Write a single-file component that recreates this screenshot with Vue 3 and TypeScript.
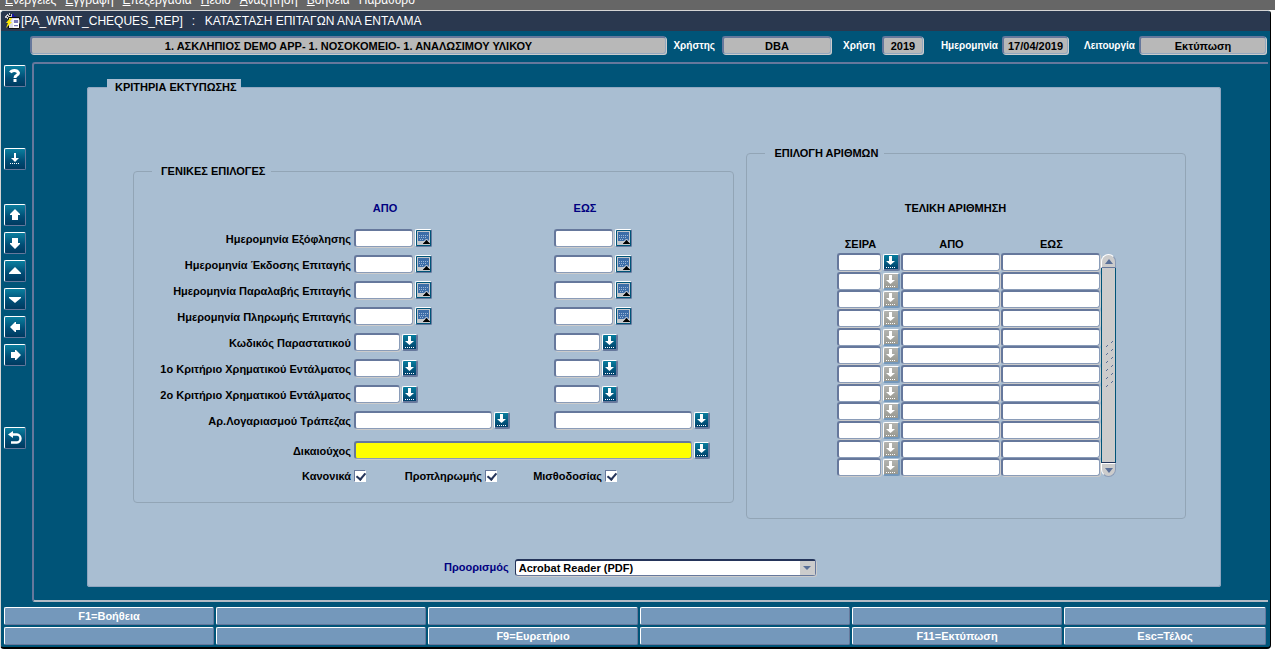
<script setup lang="ts">
import { reactive, ref } from 'vue'

type FieldKind = 'date' | 'code' | 'account'

interface CriteriaRow {
  id: string
  label: string
  kind: FieldKind
}

interface Tool {
  name: string
  icon: string
  spacing: string
}

const menus: string[] = ['Ενέργειες', 'Εγγραφή', 'Επεξεργασία', 'Πεδίο', 'Αναζήτηση', 'Βοήθεια', 'Παράθυρο']

const tools: Tool[] = [
  { name: 'Βοήθεια', icon: 'help', spacing: '' },
  { name: 'Λίστα τιμών', icon: 'list', spacing: 'far' },
  { name: 'Προηγούμενο μπλοκ', icon: 'up', spacing: 'apart' },
  { name: 'Επόμενο μπλοκ', icon: 'down', spacing: '' },
  { name: 'Προηγούμενη εγγραφή', icon: 'prev', spacing: '' },
  { name: 'Επόμενη εγγραφή', icon: 'next', spacing: '' },
  { name: 'Αριστερά', icon: 'left', spacing: '' },
  { name: 'Δεξιά', icon: 'right', spacing: '' },
  { name: 'Επιστροφή', icon: 'back', spacing: 'far' },
]

const criteria: CriteriaRow[] = [
  { id: 'payoff', label: 'Ημερομηνία Εξόφλησης', kind: 'date' },
  { id: 'issue', label: 'Ημερομηνία Έκδοσης Επιταγής', kind: 'date' },
  { id: 'receipt', label: 'Ημερομηνία Παραλαβής Επιταγής', kind: 'date' },
  { id: 'payment', label: 'Ημερομηνία Πληρωμής Επιταγής', kind: 'date' },
  { id: 'doc', label: 'Κωδικός Παραστατικού', kind: 'code' },
  { id: 'crit1', label: '1ο Κριτήριο Χρηματικού Εντάλματος', kind: 'code' },
  { id: 'crit2', label: '2ο Κριτήριο Χρηματικού Εντάλματος', kind: 'code' },
  { id: 'bank', label: 'Αρ.Λογαριασμού Τράπεζας', kind: 'account' },
]

const checks = reactive({ regular: true, prepaid: true, payroll: true })
const destination = ref('pdf')
const fnKeys: string[] = ['F1=Βοήθεια', '', '', '', '', '', '', '', 'F9=Ευρετήριο', '', 'F11=Εκτύπωση', 'Esc=Τέλος']
</script>

<template>
  <div class="app">
    <nav class="menubar">
      <a v-for="m in menus" :key="m" href="#"><span class="key">{{ m.charAt(0) }}</span>{{ m.slice(1) }}</a>
    </nav>

    <main class="window">
      <header class="titlebar">
        <svg class="app-icon" viewBox="0 0 16 16" aria-hidden="true">
          <path d="M1 3h1V2h1V1h1v1h1V0h1v2h1V1h1v2h1v2H8v1H3V5H1z" fill="#c9c9cf" />
          <path d="M8 1h2v2h2v2h-2V4H8z" fill="#1616a0" />
          <path d="M5 2h2v1H5zM3 3h1v1H3z" fill="#111" />
          <path d="M4.500 4.500h11v11h-11z" fill="#dcdce4" stroke="#111" />
          <path d="M10 7h4M10 9h4M10 12h4" stroke="#14148c" />
          <path d="M9 6.500h6v4H9zM9.500 11.500h5v3h-5z" fill="none" stroke="#fff" />
          <path d="M6 5 2 10h2l-2 5 6-6H6l2-4z" fill="#ffe800" />
        </svg>
        <span>[PA_WRNT_CHEQUES_REP]</span>
        <span class="colon">:</span>
        <span>ΚΑΤΑΣΤΑΣΗ ΕΠΙΤΑΓΩΝ ΑΝΑ ΕΝΤΑΛΜΑ</span>
      </header>

      <div class="status">
        <input class="ro context" aria-label="Εφαρμογή" readonly value="1. ΑΣΚΛΗΠΙΟΣ DEMO APP- 1. ΝΟΣΟΚΟΜΕΙΟ- 1. ΑΝΑΛΩΣΙΜΟΥ ΥΛΙΚΟΥ" />
        <label class="l-user" for="user">Χρήστης</label>
        <input id="user" class="ro user" readonly value="DBA" />
        <label class="l-year" for="year">Χρήση</label>
        <input id="year" class="ro year" readonly value="2019" />
        <label class="l-date" for="date">Ημερομηνία</label>
        <input id="date" class="ro date" readonly value="17/04/2019" />
        <label class="l-mode" for="mode">Λειτουργία</label>
        <input id="mode" class="ro mode" readonly value="Εκτύπωση" />
      </div>

      <div class="body">
        <aside class="toolbar">
          <button v-for="t in tools" :key="t.icon" type="button" :class="['tool', t.spacing]" :aria-label="t.name">
            <svg viewBox="0 0 18 18" aria-hidden="true">
              <path v-if="t.icon === 'help'" d="M4.500 5.500Q5.500 3.500 8.500 3.500T12.500 6Q12.500 7.500 10.500 8.500Q9 9.300 9 11M7.500 13.500h3" fill="none" stroke="#fff" stroke-width="3" />
              <path v-else-if="t.icon === 'list'" d="M8 3h2v5h3l-4 4-4-4h3zM4 13h1v1H4zM6 13h1v1H6zM8 13h1v1H8zM10 13h1v1h-1zM12 13h1v1h-1z" fill="#fff" />
              <path v-else-if="t.icon === 'up'" d="M9 3l5 5v1h-2v5H6V9H4V8z" fill="#fff" />
              <path v-else-if="t.icon === 'down'" d="M9 15l5-5V9h-2V4H6v5H4v1z" fill="#fff" />
              <path v-else-if="t.icon === 'prev'" d="M9 5l6 6v1H3v-1z" fill="#fff" />
              <path v-else-if="t.icon === 'next'" d="M9 13l6-5V7H3v1z" fill="#fff" />
              <path v-else-if="t.icon === 'left'" d="M4 9l5-5h1v2h4v6h-4v2H9z" fill="#fff" />
              <path v-else-if="t.icon === 'right'" d="M15 9l-5-5H9v2H5v6h4v2h1z" fill="#fff" />
              <g v-else>
                <path d="M5 5.500h6a3.500 4 0 0 1 0 8H5" fill="none" stroke="#fff" stroke-width="2.400" />
                <path d="M2 5.500L7 2v7z" fill="#fff" />
              </g>
            </svg>
          </button>
        </aside>

        <section class="frame">
          <fieldset class="panel">
            <legend>ΚΡΙΤΗΡΙΑ ΕΚΤΥΠΩΣΗΣ</legend>

            <div class="groups">
              <fieldset class="group general">
                <legend>ΓΕΝΙΚΕΣ ΕΠΙΛΟΓΕΣ</legend>
                <div class="row heads">
                  <span></span>
                  <span class="head">ΑΠΟ</span>
                  <span class="head">ΕΩΣ</span>
                </div>

                <div v-for="c in criteria" :key="c.id" class="row">
                  <label :for="c.id + '-from'">{{ c.label }}</label>
                  <div v-for="side in ['from', 'to']" :key="side" class="field">
                    <input :id="c.id + '-' + side" :class="['box', c.kind]" type="text" :aria-label="side === 'to' ? c.label + ' ΕΩΣ' : undefined" />
                    <button v-if="c.kind === 'date'" type="button" class="cal" aria-label="Ημερολόγιο">
                      <svg viewBox="0 0 13 14" aria-hidden="true">
                        <path d="M0 0h13v14H0z" fill="#c4c8cc" />
                        <path d="M1 1h11v9H1z" fill="#3c6da8" />
                        <path d="M2 4.500h1M4 4.500h1M6 4.500h1M8 4.500h1M10 4.500h1M2 6.500h1M4 6.500h1M6 6.500h1M8 6.500h1M3 8.500h1M5 8.500h1" stroke="#9db8d8" />
                        <path d="M9.500 9 13 12.500V13H6v-.500z" fill="#000" />
                        <path d="M6 11.500 9.500 8l3.500 3.500" fill="none" stroke="#d8d8d8" />
                      </svg>
                    </button>
                    <button v-else type="button" class="lov" aria-label="Λίστα">
                      <svg viewBox="0 0 13 14" aria-hidden="true"><path d="M5 1h3v5h3L6.500 10 2 6h3zM2 12h1v1H2zM4 12h1v1H4zM6 12h1v1H6zM8 12h1v1H8zM10 12h1v1h-1z" /></svg>
                    </button>
                  </div>
                </div>

                <div class="row payee-row">
                  <label for="payee">Δικαιούχος</label>
                  <div class="field wide">
                    <input id="payee" class="box payee" type="text" />
                    <button type="button" class="lov" aria-label="Λίστα">
                      <svg viewBox="0 0 13 14" aria-hidden="true"><path d="M5 1h3v5h3L6.500 10 2 6h3zM2 12h1v1H2zM4 12h1v1H4zM6 12h1v1H6zM8 12h1v1H8zM10 12h1v1h-1z" /></svg>
                    </button>
                  </div>
                </div>

                <div class="row">
                  <label class="level" for="regular">Κανονικά</label>
                  <div class="field wide checks">
                    <input id="regular" v-model="checks.regular" type="checkbox" />
                    <label class="l-prepaid" for="prepaid">Προπληρωμής</label>
                    <input id="prepaid" v-model="checks.prepaid" type="checkbox" />
                    <label class="l-payroll" for="payroll">Μισθοδοσίας</label>
                    <input id="payroll" v-model="checks.payroll" type="checkbox" />
                  </div>
                </div>
              </fieldset>

              <fieldset class="group numbers">
                <legend>ΕΠΙΛΟΓΗ ΑΡΙΘΜΩΝ</legend>
                <div class="sheet">
                  <h2>ΤΕΛΙΚΗ ΑΡΙΘΜΗΣΗ</h2>
                  <div class="grid">
                    <table>
                      <colgroup><col class="c-series" /><col class="c-lov" /><col class="c-num" /><col class="c-num" /></colgroup>
                      <thead>
                        <tr><th>ΣΕΙΡΑ</th><td></td><th>ΑΠΟ</th><th>ΕΩΣ</th></tr>
                      </thead>
                      <tbody>
                        <tr v-for="n in 12" :key="n">
                          <td><input class="box series" type="text" :aria-label="'ΣΕΙΡΑ ' + n" /></td>
                          <td>
                            <button type="button" class="lov" :disabled="n > 1" aria-label="Λίστα">
                              <svg viewBox="0 0 13 14" aria-hidden="true"><path d="M5 1h3v5h3L6.500 10 2 6h3zM2 12h1v1H2zM4 12h1v1H4zM6 12h1v1H6zM8 12h1v1H8zM10 12h1v1h-1z" /></svg>
                            </button>
                          </td>
                          <td><input class="box num" type="text" :aria-label="'ΑΠΟ ' + n" /></td>
                          <td><input class="box num" type="text" :aria-label="'ΕΩΣ ' + n" /></td>
                        </tr>
                      </tbody>
                    </table>
                    <div class="scroll">
                      <button type="button" class="s-up" aria-label="Πάνω"><svg viewBox="0 0 8 5" aria-hidden="true"><path d="M4 0l4 5H0z" /></svg></button>
                      <div class="thumb">
                        <svg viewBox="0 0 8 56" aria-hidden="true"><path v-for="i in 6" :key="i" :d="`M1 ${i * 8 + 2}l2-2M6 ${i * 8 - 2}l2-2`" /></svg>
                      </div>
                      <button type="button" class="s-down" aria-label="Κάτω"><svg viewBox="0 0 8 5" aria-hidden="true"><path d="M0 0h8L4 5z" /></svg></button>
                    </div>
                  </div>
                </div>
              </fieldset>
            </div>

            <div class="dest">
              <label for="dest">Προορισμός</label>
              <div class="combo">
                <select id="dest" v-model="destination">
                  <option value="pdf">Acrobat Reader (PDF)</option>
                </select>
                <span class="arrow"><svg viewBox="0 0 8 4" aria-hidden="true"><path d="M0 0h8L4 4z" /></svg></span>
              </div>
            </div>
          </fieldset>
        </section>
      </div>

      <footer class="keys">
        <button v-for="(k, i) in fnKeys" :key="i" type="button">{{ k }}</button>
      </footer>
    </main>
  </div>
</template>

<style>
body {
  background: #fff;
}
</style>

<style scoped>
.app {
  font: bold 11px/15px "Liberation Sans", Arial, sans-serif;
  color: #000;
}
.app * {
  box-sizing: border-box;
}
input,
button,
select {
  font: inherit;
  color: inherit;
  margin: 0;
  padding: 0;
  border-radius: 0;
  outline: none;
}
svg {
  display: block;
}
.menubar {
  display: flex;
  align-items: flex-end;
  gap: 9px;
  height: 10px;
  padding: 0 5px 2px;
  overflow: hidden;
  background: #666;
  font-weight: normal;
  font-size: 12px;
}
.menubar a {
  color: #fff;
  text-decoration: none;
}
.menubar a:not(:last-child) .key {
  text-decoration: underline;
}
.window {
  margin-right: 4px;
  border: 1px solid #d4d4d4;
  border-right-color: #000;
  border-bottom: 2px solid #000;
  border-radius: 4px;
  background: #005478;
  overflow: hidden;
}
.titlebar {
  display: flex;
  align-items: center;
  height: 20px;
  padding-left: 3px;
  background: #2a384f;
  color: #fff;
  font-weight: normal;
  font-size: 12px;
}
.app-icon {
  width: 16px;
  height: 16px;
  margin-right: 1px;
}
.colon {
  width: 22px;
  padding-left: 9px;
}
.status {
  display: flex;
  align-items: center;
  padding: 5px 4px 0 29px;
  color: #fff;
}
.status label {
  font-size: 10px;
  text-align: right;
  flex: none;
}
.ro {
  height: 18px;
  border: 2px solid #66789c;
  border-right: 1px solid #93a7be;
  border-bottom: 1px solid #93a7be;
  border-radius: 3px;
  box-shadow: 1px 1px 0 #ccc;
  background: #b8b8b8;
  color: #000;
  text-align: center;
  flex: none;
}
.ro.context {
  flex: 1;
  min-width: 0;
}
.l-user { width: 56px; padding-right: 7px; }
.l-year { width: 51px; padding-right: 7px; }
.l-date { width: 79px; padding-right: 4px; }
.l-mode { width: 71px; padding-right: 4px; }
.user { width: 109px; }
.year { width: 41px; }
.date { width: 66px; }
.mode { width: 127px; }

.body {
  display: flex;
  padding-top: 8px;
}
.toolbar {
  display: flex;
  flex-direction: column;
  gap: 6px;
  width: 31px;
  padding: 3px 0 0 3px;
  flex: none;
}
.tool {
  width: 22px;
  height: 22px;
  padding: 1px;
  border: 1px solid #fff;
  border-right-color: #66789c;
  border-bottom-color: #66789c;
  border-radius: 2px;
  background: linear-gradient(#0b7f9f, #004c74 60%, #003a60);
}
.tool svg {
  width: 18px;
  height: 18px;
}
.tool.far { margin-top: 55px; }
.tool.apart { margin-top: 28px; }

.frame {
  flex: 1;
  min-width: 0;
  margin-right: 2px;
  padding: 15px 47px 13px 53px;
  border: 2px solid #66789c;
  border-right: 0;
  border-bottom-color: #b3bcc6;
  border-radius: 3px 0 0 3px;
}
.panel {
  margin: 0;
  padding: 0 34px 10px 45px;
  border: 1px solid #8fa5bf;
  border-top-color: #93a9c2;
  border-radius: 3px;
  background: #a9bed2;
}
.panel > legend {
  margin-left: -26px;
  padding: 0 4px 0 8px;
  line-height: 17px;
  background: #a9bed2;
}
.groups {
  display: grid;
  grid-template-columns: 602fr 440fr;
  gap: 12px;
  align-items: start;
}
.group {
  min-width: 0;
  margin: 0;
  padding: 0;
  border: 1px solid #92a5b6;
  border-radius: 4px;
}
.group > legend {
  margin-left: 18px;
  padding: 0 6px 0 9px;
}
.general {
  margin-top: 68px;
  padding-bottom: 13px;
}
.numbers {
  margin-top: 50px;
  padding-bottom: 41px;
}
.row {
  display: grid;
  grid-template-columns: 220px 200px 1fr;
  align-items: center;
  height: 26px;
}
.row > label {
  padding: 2px 3px 0 0;
  text-align: right;
}
.row > .level {
  padding-top: 0;
}
.heads {
  margin: 16px 0 4px;
  color: #000080;
}
.head {
  width: 62px;
  text-align: center;
}
.field {
  display: flex;
  align-items: center;
  gap: 2px;
}
.wide {
  grid-column: 2 / 4;
}
.box {
  display: block;
  height: 18px;
  border: 2px solid #66789c;
  border-right: 1px solid #8a9cb8;
  border-bottom: 1px solid #8a9cb8;
  border-radius: 3px;
  box-shadow: 1px 1px 0 #ccc;
  background: #fff;
}
.box.date { width: 59px; }
.box.code { width: 46px; }
.box.account { width: 138px; }
.box.payee { width: 338px; background: #ff0; }
.box.series { width: 44px; }
.box.num { width: 99px; }

.lov,
.cal {
  display: block;
  width: 16px;
  height: 17px;
  border: 1px solid #fff;
  border-right: 2px solid #66789c;
  border-bottom: 2px solid #66789c;
  border-radius: 2px;
  background: linear-gradient(#087d9e, #003f69);
}
.lov svg {
  width: 13px;
  height: 14px;
  fill: #fff;
}
.cal {
  width: 17px;
  height: 18px;
  border-right-width: 1px;
  border-bottom-width: 1px;
  padding: 1px;
  background: #005478;
}
.cal svg {
  width: 13px;
  height: 14px;
}
.lov:disabled {
  border-right-color: #7498bb;
  border-bottom-color: #7498bb;
  background: linear-gradient(#b4b4b0, #989890);
}
.payee-row {
  margin-top: 4px;
}
.checks {
  gap: 3px;
}
.checks label {
  text-align: right;
}
.l-prepaid { width: 113px; }
.l-payroll { width: 102px; }
input[type="checkbox"] {
  appearance: none;
  width: 12px;
  height: 12px;
  border: 1px solid #66789c;
  border-right-color: #fff;
  border-bottom-color: #fff;
  background: #fff;
}
input[type="checkbox"]:checked::before {
  content: "";
  display: block;
  width: 4px;
  height: 7px;
  margin: 0 0 0 3px;
  border: solid #24345a;
  border-width: 0 2px 2px 0;
  transform: rotate(40deg);
}
.sheet {
  width: 279px;
  margin: 39px auto 0 90px;
}
h2 {
  margin: 0 0 19px;
  padding-right: 43px;
  font: inherit;
  line-height: 16px;
  text-align: center;
}
.grid {
  display: flex;
  align-items: flex-end;
}
table {
  width: 264px;
  height: 242px;
  table-layout: fixed;
  border-collapse: collapse;
  flex: none;
}
th,
td {
  padding: 0;
  vertical-align: top;
}
thead tr {
  height: 18px;
}
thead th {
  vertical-align: middle;
}
.c-series { width: 46px; }
.c-lov { width: 18px; }
.c-num { width: 100px; }
td .lov {
  width: 17px;
  margin-top: 1px;
}
.scroll {
  display: flex;
  flex-direction: column;
  width: 15px;
  height: 223px;
}
.scroll button {
  display: flex;
  align-items: center;
  justify-content: center;
  height: 14px;
  border: 1px solid #fff;
  background: #ccc;
}
.scroll button svg {
  width: 8px;
  height: 5px;
  fill: #5a7098;
}
.scroll .s-up {
  border-right-color: #8a9cb8;
  border-bottom-color: #66789c;
  border-radius: 8px 8px 0 0;
}
.scroll .s-down {
  border-right-color: #8a9cb8;
  border-bottom-color: #8a9cb8;
  border-radius: 0 0 8px 8px;
}
.thumb {
  display: flex;
  align-items: center;
  justify-content: center;
  flex: 1;
  border: 1px solid #005478;
  border-top: 0;
  border-bottom-color: #24345a;
  background: #ccc;
}
.thumb svg {
  width: 8px;
  height: 56px;
  stroke: #5a7098;
}
.dest {
  display: flex;
  align-items: center;
  margin-top: 40px;
  padding-left: 311px;
  gap: 6px;
  color: #000080;
}
.combo {
  position: relative;
  width: 301px;
  height: 17px;
}
select {
  appearance: none;
  display: block;
  width: 100%;
  height: 17px;
  padding: 1px 18px 0 3px;
  border: 1px solid #66789c;
  border-top: 2px solid #24345a;
  border-left-color: #24345a;
  border-radius: 3px;
  box-shadow: 1px 1px 0 #ccc;
  background: #fff;
  color: #000;
  line-height: 13px;
}
.arrow {
  position: absolute;
  top: 2px;
  right: 1px;
  bottom: 1px;
  width: 15px;
  display: flex;
  align-items: center;
  justify-content: center;
  background: #ccc;
  pointer-events: none;
}
.arrow svg {
  width: 8px;
  height: 4px;
  fill: #5a7098;
}
.keys {
  display: grid;
  grid-template-columns: repeat(5, 210fr) 202fr;
  gap: 2px;
  padding: 5px 4px 2px 3px;
}
.keys button {
  min-width: 0;
  height: 18px;
  border: 1px solid #fff;
  border-right-color: #66789c;
  border-bottom-color: #66789c;
  border-radius: 2px;
  background: #7498bb;
  color: #fff;
}
</style>
